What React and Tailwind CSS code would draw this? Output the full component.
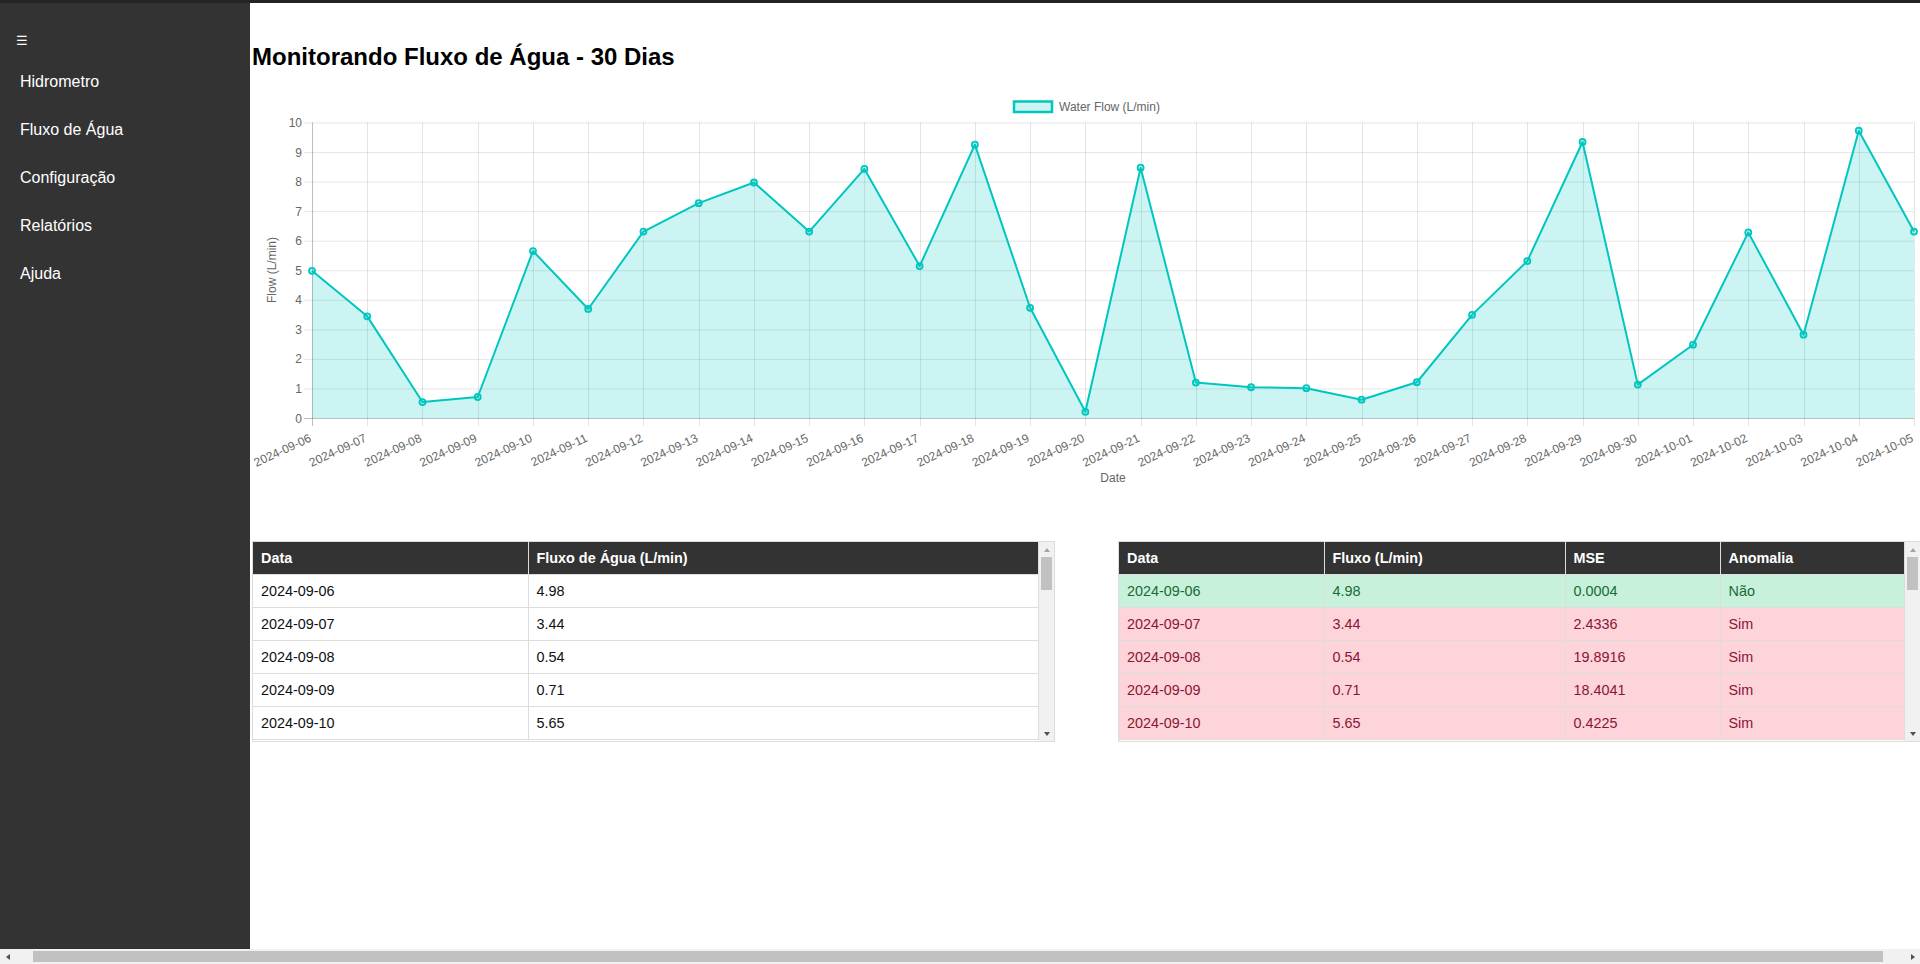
import React from "react";

const valores = [
  4.98, 3.44, 0.54, 0.71, 5.65, 3.69, 6.31, 7.27, 7.97, 6.31, 8.43, 5.14, 9.25,
  3.73, 0.21, 8.47, 1.2, 1.04, 1.01, 0.62, 1.21, 3.49, 5.31, 9.34, 1.13, 2.48,
  6.28, 2.82, 9.72, 6.31,
];

// 2024-09-06 ate 2024-10-05
const datas = [];
for (let d = 6; d <= 30; d++) datas.push(`2024-09-${String(d).padStart(2, "0")}`);
for (let d = 1; d <= 5; d++) datas.push(`2024-10-0${d}`);

const dados = datas.map((data, i) => {
  const fluxo = valores[i];
  const mse = (fluxo - 5) ** 2;
  return { data, fluxo, mse, anomalia: mse > 0.1 };
});

// so as linhas que cabem na caixa (o resto fica "embaixo" da barra de rolagem)
const visiveis = dados.slice(0, 5);

const menu = ["Hidrometro", "Fluxo de Água", "Configuração", "Relatórios", "Ajuda"];

const LINE = "rgb(0,198,192)";
const FILL = "rgba(0,198,192,0.2)";
const GRID = "rgba(0,0,0,0.1)";
const FONT = "Liberation Sans, Arial, sans-serif";

function Grafico() {
  const x0 = 60;
  const x1 = 1662;
  const yTop = 37.5;
  const yBot = 333;
  const passo = (x1 - x0) / 29;
  const px = (i) => x0 + i * passo;
  const py = (v) => yBot - (v / 10) * (yBot - yTop);

  const pontos = valores.map((v, i) => `${px(i)},${py(v)}`).join(" ");
  const area = `${px(0)},${yBot} ${pontos} ${px(29)},${yBot}`;

  return (
    <svg width="1668" height="415" className="block overflow-visible">
      {/* legenda */}
      <rect x="762" y="16.5" width="38" height="10.5" fill={FILL} stroke={LINE} strokeWidth="2.5" />
      <text x="807" y="25.8" fontSize="12" fill="#666" fontFamily={FONT}>
        Water Flow (L/min)
      </text>

      {/* grade horizontal */}
      {Array.from({ length: 11 }, (_, k) => (
        <g key={k}>
          <line
            x1={x0 - 8}
            x2={x1}
            y1={py(k) + 0.5}
            y2={py(k) + 0.5}
            stroke={k === 0 ? "rgba(0,0,0,0.25)" : GRID}
          />
          <text x="50" y={py(k) + 4.5} textAnchor="end" fontSize="12" fill="#666" fontFamily={FONT}>
            {k}
          </text>
        </g>
      ))}

      {/* grade vertical */}
      {datas.map((d, i) => (
        <line
          key={d}
          x1={Math.round(px(i)) + 0.5}
          x2={Math.round(px(i)) + 0.5}
          y1={yTop}
          y2={yBot + 8}
          stroke={i === 0 ? "rgba(0,0,0,0.25)" : GRID}
        />
      ))}

      <polygon points={area} fill={FILL} />
      <polyline points={pontos} fill="none" stroke={LINE} strokeWidth="2" strokeLinejoin="round" />
      {valores.map((v, i) => (
        <circle key={i} cx={px(i)} cy={py(v)} r="3" fill={FILL} stroke={LINE} strokeWidth="1.8" />
      ))}

      {/* rotulos do eixo x */}
      {datas.map((d, i) => (
        <text
          key={d}
          x={px(i)}
          y="356"
          textAnchor="end"
          fontSize="12"
          fill="#666"
          fontFamily={FONT}
          transform={`rotate(-25 ${px(i)} 356)`}
        >
          {d}
        </text>
      ))}

      <text transform="translate(24 185) rotate(-90)" textAnchor="middle" fontSize="12" fill="#666" fontFamily={FONT}>
        Flow (L/min)
      </text>
      <text x="861" y="397" textAnchor="middle" fontSize="12" fill="#666" fontFamily={FONT}>
        Date
      </text>
    </svg>
  );
}

// barra de rolagem vertical (estilo classico do chrome)
function BarraVertical() {
  return (
    <div className="w-[15px] shrink-0 bg-[#f1f1f1] flex flex-col">
      <div className="h-[15px] flex items-center justify-center">
        <div className="w-0 h-0 border-x-[3.5px] border-x-transparent border-b-[4px] border-b-[#a3a3a3]" />
      </div>
      <div className="flex-1">
        <div className="ml-[2px] w-[11px] h-[33px] bg-[#c1c1c1]" />
      </div>
      <div className="h-[15px] flex items-center justify-center">
        <div className="w-0 h-0 border-x-[3.5px] border-x-transparent border-t-[4px] border-t-[#505050]" />
      </div>
    </div>
  );
}

function BarraHorizontal() {
  return (
    <div className="h-[15px] shrink-0 bg-[#f1f1f1] flex">
      <div className="w-[15px] flex items-center justify-center">
        <div className="w-0 h-0 border-y-[3.5px] border-y-transparent border-r-[4px] border-r-[#505050]" />
      </div>
      <div className="flex-1 flex items-center">
        <div className="ml-[18px] w-[1850px] h-[11px] bg-[#c1c1c1]" />
      </div>
      <div className="w-[15px] flex items-center justify-center">
        <div className="w-0 h-0 border-y-[3.5px] border-y-transparent border-l-[4px] border-l-[#505050]" />
      </div>
    </div>
  );
}

const th = "bg-[#333] text-white font-bold text-left px-2 py-2 leading-4 border-r border-b border-[#ddd]";
const td = "px-2 py-2 leading-4 border-r border-b border-[#ddd]";

function App() {
  return (
    <div className="h-screen flex flex-col overflow-hidden font-['Liberation_Sans',Arial,sans-serif]">
      <div className="h-[3px] shrink-0 bg-[#242424]" />
      <div className="flex-1 min-h-0 flex overflow-hidden">
        {/* Sidebar */}
        <aside className="w-[250px] shrink-0 bg-[#333] text-white">
          <div className="h-[55px] pl-4 pt-[30px] text-[13px] leading-[16px] font-['DejaVu_Sans',sans-serif]">
            ☰
          </div>
          <nav>
            {menu.map((item) => (
              <div key={item} className="h-12 flex items-center px-5 text-[16px]">
                {item}
              </div>
            ))}
          </nav>
        </aside>

        {/* Conteudo */}
        <main className="flex-1 min-w-0 pl-[2px] pt-[40px]">
          <h1 className="text-[24px] leading-[28px] font-bold text-black">
            Monitorando Fluxo de Água - 30 Dias
          </h1>

          <div className="mt-[14px]">
            <Grafico />
          </div>

          <div className="mt-[41px] flex justify-between w-[1669px]">
            {/* Tabela de fluxo */}
            <div className="w-[803px] h-[201px] flex border border-[#ddd]">
              <div className="flex-1 overflow-hidden">
                <table className="w-full table-fixed border-collapse text-[14.4px] text-[#111]">
                  <colgroup>
                    <col className="w-[275px]" />
                    <col />
                  </colgroup>
                  <thead>
                    <tr>
                      <th className={th}>Data</th>
                      <th className={th}>Fluxo de Água (L/min)</th>
                    </tr>
                  </thead>
                  <tbody>
                    {visiveis.map((r) => (
                      <tr key={r.data}>
                        <td className={td}>{r.data}</td>
                        <td className={td}>{r.fluxo.toFixed(2)}</td>
                      </tr>
                    ))}
                  </tbody>
                </table>
              </div>
              <BarraVertical />
            </div>

            {/* Tabela de anomalias */}
            <div className="w-[803px] h-[201px] flex border border-[#ddd]">
              <div className="flex-1 overflow-hidden">
                <table className="w-full table-fixed border-collapse text-[14.4px]">
                  <colgroup>
                    <col className="w-[205px]" />
                    <col className="w-[241px]" />
                    <col className="w-[155px]" />
                    <col />
                  </colgroup>
                  <thead>
                    <tr>
                      <th className={th}>Data</th>
                      <th className={th}>Fluxo (L/min)</th>
                      <th className={th}>MSE</th>
                      <th className={th}>Anomalia</th>
                    </tr>
                  </thead>
                  <tbody>
                    {visiveis.map((r) => (
                      <tr
                        key={r.data}
                        className={r.anomalia ? "bg-[#fdd4da] text-[#8b1535]" : "bg-[#c8f1dc] text-[#186a34]"}
                      >
                        <td className={td}>{r.data}</td>
                        <td className={td}>{r.fluxo.toFixed(2)}</td>
                        <td className={td}>{r.mse.toFixed(4)}</td>
                        <td className={td}>{r.anomalia ? "Sim" : "Não"}</td>
                      </tr>
                    ))}
                  </tbody>
                </table>
              </div>
              <BarraVertical />
            </div>
          </div>
        </main>
      </div>
      <BarraHorizontal />
    </div>
  );
}

export default App;
